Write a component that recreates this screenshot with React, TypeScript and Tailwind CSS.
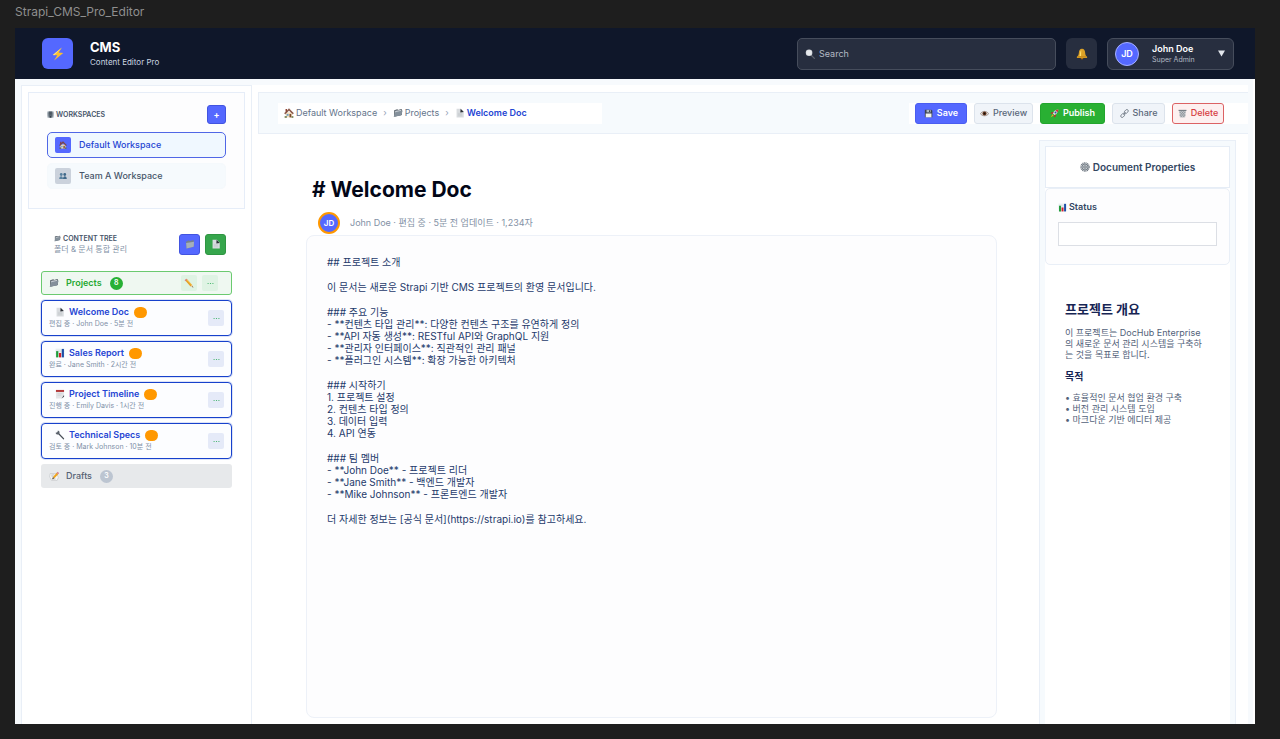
import type { ReactNode } from 'react';

type IconProps = { className?: string };

function Svg({ className = 'size-2.5', children }: { className?: string; children: ReactNode }) {
  return (
    <svg viewBox="0 0 16 16" aria-hidden="true" className={`shrink-0 ${className}`}>
      {children}
    </svg>
  );
}

const Bolt = ({ className }: IconProps) => (
  <Svg className={className}>
    <path d="M12.5 0.5 2 9.2l5.2.3L3.5 15.5 14 6.8l-5.2-.4z" fill="#fbc02d" />
    <path d="M12.5 0.5 2 9.2l2 .1z" fill="#ffe082" />
  </Svg>
);
const Magnifier = ({ className }: IconProps) => (
  <Svg className={className}>
    <path d="m9.5 9.5 5.5 5.5" stroke="#5d636e" strokeWidth="2" strokeLinecap="round" />
    <circle cx="6.5" cy="6" r="5.3" fill="#d5d9de" />
    <circle cx="6.5" cy="6" r="4" fill="#e6e9ec" />
  </Svg>
);
const Bell = ({ className }: IconProps) => (
  <Svg className={className}>
    <circle cx="8" cy="13.4" r="1.8" fill="#a86d10" />
    <path d="M8 1c3 0 4 2.4 4.2 5.4.1 2.8.9 4 2.6 5.1.5.9-.3 1.7-1.3 1.7h-11c-1 0-1.8-.8-1.3-1.7 1.7-1.100 2.500-2.300 2.600-5.100C4 3.400 5 1 8 1z" fill="#dba127" />
    <path d="M7 2.500c-1.500 1-1.600 4.500-2.300 8h2z" fill="#ffdf6b" />
    <path d="M2 11.800h12" stroke="#a86d10" strokeWidth="0.8" />
  </Svg>
);
const Building = ({ className }: IconProps) => (
  <Svg className={className}>
    <path d="M1 1h14v14H1z" fill="#9aa5ae" />
    <path d="M4 1h8v14H4z" fill="#68747e" />
    <path d="M5 3h6M5 6h6M5 9h6M1.500 5h2M1.500 9h2M12.500 5h2M12.500 9h2" stroke="#303b45" strokeWidth="1.300" />
    <path d="M6.500 12h3v3h-3z" fill="#263039" />
  </Svg>
);
const House = ({ className }: IconProps) => (
  <Svg className={className}>
    <path d="M3 7h10v8H3z" fill="#f3dfc0" />
    <path d="M2.500 1.500h2.200V6H2.500z" fill="#8a3a28" />
    <path d="M8 1 .8 8.500 2 9.600l6-5.900 6 5.900 1.200-1.100z" fill="#7d4535" stroke="#7d4535" strokeWidth=".8" />
    <path d="M8.800 9.500h2.800V15H8.800z" fill="#7b4a2b" />
    <path d="M4.300 9.500h3v3h-3z" fill="#6aa0c7" />
    <path d="M1 13h3.500v2.500H1zM12 13h3v2.500h-3z" fill="#5f6f3b" />
  </Svg>
);
const People = ({ className }: IconProps) => (
  <Svg className={className}>
    <circle cx="4.500" cy="5" r="2.800" fill="#57809f" />
    <circle cx="11.500" cy="5" r="2.800" fill="#3f6889" />
    <path d="M.5 14c0-7.500 7.500-7.500 7.500 0z" fill="#57809f" />
    <path d="M8 14c0-7.500 7.500-7.500 7.500 0z" fill="#3f6889" />
  </Svg>
);
const OpenFolder = ({ className }: IconProps) => (
  <Svg className={className}>
    <path d="M2 3.500 7 2l1 1 6-1.500V11L2 14z" fill="#46505a" />
    <path d="M3.500 4.500 13 3l-.5 6-9 2z" fill="#d3d9de" />
    <path d="m1 14 3-7.500L15.500 4 13 12z" fill="#84909b" />
  </Svg>
);
const Folder = ({ className }: IconProps) => (
  <Svg className={className}>
    <path d="M1.500 4.500 6 2l1.500 1L14 1.500v11L2.500 15z" fill="#75818e" />
    <path d="m1.800 6.500 12.700-2.300-.6 8.300-11.400 2.500z" fill="#a5afb9" />
  </Svg>
);
const Page = ({ className }: IconProps) => (
  <Svg className={className}>
    <path d="M2.500 1h7L14 6v9H2.500z" fill="#d9dcdf" />
    <path d="M9 1 14 6.500l-5.500.5z" fill="#2d3238" />
    <path d="M4.500 8.500h7M4.500 10.500h7M4.500 12.500h7" stroke="#b7bcc2" strokeWidth="0.600" />
  </Svg>
);
const Pencil = ({ className }: IconProps) => (
  <Svg className={className}>
    <path d="m3 2.500 8.800 9.800" stroke="#e5a026" strokeWidth="3.600" />
    <path d="M3.700 2 13 12" stroke="#ffd365" strokeWidth="1" />
    <path d="m1 3.700 2.600-2.600 1.300 1.500-2.600 2.500z" fill="#dc7e85" />
    <path d="m10.500 13.400 2.600-2.400 1.900 4.200z" fill="#ecc89a" />
    <path d="m13 14.200 1-1 1 2z" fill="#22252a" />
  </Svg>
);
const BarChart = ({ className }: IconProps) => (
  <Svg className={className}>
    <path d="M1 1h14v14H1z" fill="#e8eef0" />
    <path d="M1 5h14M1 9h14" stroke="#c4cdd2" strokeWidth="0.600" />
    <path d="M1.800 5h3.500v10H1.800z" fill="#1f9d3a" />
    <path d="M6.300 8h3.500v7H6.300z" fill="#d3202c" />
    <path d="M10.800 1.500h3.500V15h-3.500z" fill="#1d4fa8" />
  </Svg>
);
const Calendar = ({ className }: IconProps) => (
  <Svg className={className}>
    <path d="M1.500 3h13v9l-3 3h-10z" fill="#e3e4e7" />
    <path d="M1.500 1.500h13v3.200h-13z" fill="#b3383a" />
    <path d="M14.500 9.500v2.700l-4 3z" fill="#3a3f46" />
    <path d="M4 7.500h8M4 10h6" stroke="#c9cbd0" strokeWidth="1" />
  </Svg>
);
const Wrench = ({ className }: IconProps) => (
  <Svg className={className}>
    <path d="m5 5 8.500 8.800" stroke="#454c55" strokeWidth="2.300" strokeLinecap="round" />
    <path d="M4.600.8 3.900 3.600 1 4.300c.2 2.300 2.800 3.500 4.800 2.400L7 5.500C7.800 3.400 6.900 1.400 4.600.8z" fill="#59616b" />
  </Svg>
);
const Memo = ({ className }: IconProps) => (
  <Svg className={className}>
    <path d="M2 4h10l3 6-2 5H4L1 9z" fill="#f7f7f6" stroke="#b4b8bd" strokeWidth=".8" />
    <path d="m3.500 6.500 5-.5M4 8.500l3-.3M4.500 12.800h6" stroke="#9ba1a8" strokeWidth="0.900" />
    <path d="M13.500 4 7.500 10.500" stroke="#eea41c" strokeWidth="3.200" />
    <path d="m15 2.400-1.700 1.900" stroke="#d97b84" strokeWidth="3.200" />
    <path d="m5.200 13 1-3.300 2.400 2z" fill="#4d3f29" />
  </Svg>
);
const Floppy = ({ className }: IconProps) => (
  <Svg className={className}>
    <path d="M1.500 1.500H13L14.800 3v11.800H1.500z" fill="#3b4350" />
    <path d="M4.500 1.500h7.500V6H4.500z" fill="#aeb8c2" />
    <path d="M9 2.200h1.800v3H9z" fill="#343b46" />
    <path d="M3 8h10.300v6.800H3z" fill="#f0f1ef" />
  </Svg>
);
const Eye = ({ className }: IconProps) => (
  <Svg className={className}>
    <path d="M.5 8.500C4 2.800 12 2.800 15.500 8.500 12 13.200 4 13.200.5 8.500z" fill="#e7e2de" stroke="#75625a" strokeWidth="1" />
    <circle cx="8" cy="8" r="3.600" fill="#6b3d24" />
    <circle cx="8" cy="8" r="1.700" fill="#120c09" />
  </Svg>
);
const Rocket = ({ className }: IconProps) => (
  <Svg className={className}>
    <path d="M14.800 1c-4.500 0-7.800 2.500-10 6.500L8.300 11c4-2 6.500-5.500 6.500-10z" fill="#d5dce4" />
    <path d="M14.800 1c-2 0-3.600.4-5 1.200L13.500 6c.9-1.500 1.300-3 1.300-5z" fill="#d33035" />
    <path d="M6.500 5.300 2.700 5.800 1 8.800l4-.7zM10.500 9.500l-.5 4-3 1.700.7-4z" fill="#c4272d" />
    <circle cx="9.800" cy="6.200" r="1.700" fill="#27599a" />
    <path d="M4.500 9.500 1 15l5.500-3.500z" fill="#f6a21c" />
  </Svg>
);
const Link = ({ className }: IconProps) => (
  <Svg className={className}>
    <g fill="none" stroke="#6b7581" strokeWidth="1.400">
      <rect x="7.200" y="2" width="8" height="5" rx="2.500" transform="rotate(-45 11.200 4.500)" />
      <rect x=".8" y="9" width="8" height="5" rx="2.500" transform="rotate(-45 4.800 11.500)" />
      <path d="m5.800 10.200 4.400-4.400" />
    </g>
  </Svg>
);
const Trash = ({ className }: IconProps) => (
  <Svg className={className}>
    <path d="M2 3h12l-1.300 12H3.300z" fill="#c3c6ca" />
    <path d="m3 5 8 9M6 4l7 8M3.500 10l3.500 4.500M13 5l-8 9M10 4l-7 8M12.500 10 9 14.500M10 4l3 3M6 4 3 7" stroke="#777d84" strokeWidth=".8" />
    <path d="M1 1.500h14v2H1z" fill="#747a82" />
  </Svg>
);
const Gear = ({ className }: IconProps) => (
  <Svg className={className}>
    <circle cx="8" cy="8" r="6.600" fill="none" stroke="#6f7882" strokeWidth="2" strokeDasharray="1.700 .9" />
    <circle cx="8" cy="8" r="5" fill="#d3d8dc" stroke="#6a737d" strokeWidth="1.600" />
    <path d="M8 3.500v9M4 5.700l8 4.600M12 5.700l-8 4.600" stroke="#7b848d" strokeWidth=".8" />
    <circle cx="8" cy="8" r="1.900" fill="#e3e6e9" stroke="#444d57" />
  </Svg>
);
const Dots = ({ className }: IconProps) => (
  <Svg className={className}>
    <g fill="#35b060">
      <circle cx="2.500" cy="8" r="1.400" />
      <circle cx="8" cy="8" r="1.400" />
      <circle cx="13.500" cy="8" r="1.400" />
    </g>
  </Svg>
);

const documents = [
  { title: 'Welcome Doc', meta: '편집 중 · John Doe · 5분 전', Icon: Page },
  { title: 'Sales Report', meta: '완료 · Jane Smith · 2시간 전', Icon: BarChart },
  { title: 'Project Timeline', meta: '진행 중 · Emily Davis · 1시간 전', Icon: Calendar },
  { title: 'Technical Specs', meta: '검토 중 · Mark Johnson · 10분 전', Icon: Wrench },
];

const blocks = [
  ['## 프로젝트 소개'],
  ['이 문서는 새로운 Strapi 기반 CMS 프로젝트의 환영 문서입니다.'],
  [
    '### 주요 기능',
    '- **컨텐츠 타입 관리**: 다양한 컨텐츠 구조를 유연하게 정의',
    '- **API 자동 생성**: RESTful API와 GraphQL 지원',
    '- **관리자 인터페이스**: 직관적인 관리 패널',
    '- **플러그인 시스템**: 확장 가능한 아키텍처',
  ],
  ['### 시작하기', '1. 프로젝트 설정', '2. 컨텐츠 타입 정의', '3. 데이터 입력', '4. API 연동'],
  [
    '### 팀 멤버',
    '- **John Doe** - 프로젝트 리더',
    '- **Jane Smith** - 백엔드 개발자',
    '- **Mike Johnson** - 프론트엔드 개발자',
  ],
  ['더 자세한 정보는 [공식 문서](https://strapi.io)를 참고하세요.'],
];

function Header() {
  return (
    <header className="flex h-[51px] shrink-0 items-center bg-[#0f172a] pr-[21px] pl-[27px]">
      <div className="flex size-[31px] items-center justify-center rounded-md bg-[#5468ff]">
        <Bolt className="size-3.5" />
      </div>
      <div className="ml-[17px] flex flex-col">
        <span className="text-[13px] leading-4 font-bold text-white">CMS</span>
        <span className="text-[8px] leading-[14px] text-[#cbd5e1]">Content Editor Pro</span>
      </div>
      <label className="ml-auto flex h-8 w-[259px] items-center gap-1 rounded-[5px] border border-[#464d5c] bg-[#272e3f] px-[7px]">
        <Magnifier />
        <input
          type="search"
          aria-label="Search"
          placeholder="Search"
          className="min-w-0 flex-1 bg-transparent text-[9px] leading-3 text-white outline-none placeholder:text-[#b4bac5]"
        />
      </label>
      <button type="button" aria-label="Notifications" className="ml-2.5 flex size-[31px] items-center justify-center rounded-md bg-[#272e3f]">
        <Bell className="size-3" />
      </button>
      <button type="button" className="ml-2.5 flex h-8 w-[127px] items-center rounded-md border border-[#464d5c] bg-[#272e3f] pr-2 pl-[7px] text-left">
        <span className="flex size-6 items-center justify-center rounded-full border border-[#a5b0ff] bg-[#5468ff] text-[9px] font-semibold text-white">
          JD
        </span>
        <span className="ml-[13px] flex flex-col">
          <span className="text-[9px] leading-[11px] font-semibold text-white">John Doe</span>
          <span className="text-[7px] leading-[11px] text-[#b4bac5]">Super Admin</span>
        </span>
        <svg viewBox="0 0 7 7" aria-hidden="true" className="ml-auto size-[7px]">
          <path d="M0 .5h7l-3.500 6z" fill="#e2e6ec" />
        </svg>
      </button>
    </header>
  );
}

function Workspaces() {
  return (
    <section className="border border-[#e6edf8] bg-[#fdfdfe] px-[18px] pt-3 pb-[19px]">
      <div className="flex items-center justify-between">
        <h2 className="flex items-center gap-0.5 text-[7px] leading-3 font-semibold text-[#475569]">
          <Building className="size-[7px]" />
          WORKSPACES
        </h2>
        <button type="button" aria-label="Add workspace" className="flex size-[19px] items-center justify-center rounded-[3px] border border-[#4254e0] bg-[#5468ff] text-[9px] font-bold text-white">
          +
        </button>
      </div>
      <nav className="mt-2 flex flex-col gap-[5px] text-[9px] leading-3 font-medium">
        <a href="#default" className="flex h-[26px] items-center gap-2 rounded-[5px] border border-[#5067e6] bg-[#f0f8ff] px-[7px] text-[#2545d3]">
          <span className="flex size-4 items-center justify-center rounded-[2px] bg-[#5468ff]">
            <House className="size-2" />
          </span>
          Default Workspace
        </a>
        <a href="#team-a" className="flex h-[26px] items-center gap-2 rounded-[5px] border border-[#f5f9fc] bg-[#f6fafd] px-[7px] text-[#475569]">
          <span className="flex size-4 items-center justify-center rounded-[2px] bg-[#cbd2dc]">
            <People className="size-2" />
          </span>
          Team A Workspace
        </a>
      </nav>
    </section>
  );
}

function ContentTree() {
  return (
    <section className="mt-6 px-[13px]">
      <div className="flex items-center justify-between pr-1.5 pl-[13px]">
        <div>
          <h2 className="flex items-center gap-0.5 text-[7px] leading-[11px] font-semibold text-[#475569]">
            <OpenFolder className="size-[7px]" />
            CONTENT TREE
          </h2>
          <p className="text-[8px] leading-[11px] text-[#8493a8]">폴더 &amp; 문서 통합 관리</p>
        </div>
        <div className="flex gap-[5px]">
          <button type="button" aria-label="New folder" className="flex size-[21px] items-center justify-center rounded-[3px] border border-[#4254e0] bg-[#5468ff]">
            <Folder />
          </button>
          <button type="button" aria-label="New document" className="flex size-[21px] items-center justify-center rounded-[3px] border border-[#2f9542] bg-[#36a64c]">
            <Page />
          </button>
        </div>
      </div>
      <ul className="mt-4 flex flex-col gap-[5px]">
        <li className="flex h-6 items-center rounded-[3px] border border-[#6bca70] bg-[#eff8f1] pr-[13px] pl-[7px]">
          <OpenFolder />
          <span className="ml-[7px] text-[9px] leading-3 font-semibold text-[#27a933]">Projects</span>
          <span className="ml-2 flex size-[13px] items-center justify-center rounded-full bg-[#27b034] text-[7px] font-semibold text-white">8</span>
          <button type="button" aria-label="Rename Projects" className="ml-auto flex size-4 items-center justify-center rounded-[2px] bg-[#dff3e4]">
            <Pencil />
          </button>
          <button type="button" aria-label="More for Projects" className="ml-[5px] flex size-4 items-center justify-center rounded-[2px] bg-[#dff3e4]">
            <Dots className="size-[7px]" />
          </button>
        </li>
        {documents.map(({ title, meta, Icon }) => (
          <li key={title} className="flex h-9 items-center justify-between rounded-[4px] border border-[#1741cc] bg-[#fcfdff] px-[7px] ring-1 ring-[#1741cc]/15">
            <div>
              <div className="flex items-center pl-1.5">
                <Icon />
                <a href="#document" className="ml-1 text-[9px] leading-3 font-semibold text-[#2545d3]">{title}</a>
                <span className="ml-[5px] h-[11px] w-[13px] rounded-full bg-[#ff9800]" />
              </div>
              <p className="text-[7px] leading-3 text-[#7f90a7]">{meta}</p>
            </div>
            <button type="button" aria-label={`More for ${title}`} className="flex size-4 items-center justify-center rounded-[2px] bg-[#e5eaf8]">
              <Dots className="size-[7px]" />
            </button>
          </li>
        ))}
        <li className="flex h-6 items-center rounded-[3px] bg-[#e7e9eb] px-2">
          <Memo />
          <span className="ml-[7px] text-[9px] leading-3 font-medium text-[#566274]">Drafts</span>
          <span className="ml-2 flex size-[13px] items-center justify-center rounded-full bg-[#bcc5d1] text-[7px] font-semibold text-white">3</span>
        </li>
      </ul>
    </section>
  );
}

const actionBase = 'flex h-[21px] items-center justify-center gap-1 rounded-[3px] border text-[9px] leading-3';

function Toolbar() {
  return (
    <div className="flex h-[42px] shrink-0 items-center justify-between border border-r-0 border-[#e9eff7] bg-[#f6fafd] pl-[19px]">
      <nav aria-label="Breadcrumb" className="flex h-[21px] w-[324px] items-center bg-white pl-1.5 text-[9px] leading-3 text-[#64748b]">
        <a href="#default" className="flex items-center gap-0.5"><House />Default Workspace</a>
        <span className="mx-1.5 text-[#94a3b8]">›</span>
        <a href="#projects" className="flex items-center gap-0.5"><OpenFolder />Projects</a>
        <span className="mx-1.5 text-[#94a3b8]">›</span>
        <a href="#document" aria-current="page" className="flex items-center gap-0.5 font-semibold text-[#2545d3]"><Page />Welcome Doc</a>
      </nav>
      <div className="flex h-[21px] gap-[7px] bg-white pr-6 pl-1.5">
        <button type="button" className={`${actionBase} w-[52px] border-[#4a5df0] bg-[#5468ff] font-semibold text-white`}><Floppy className="size-[9px]" />Save</button>
        <button type="button" className={`${actionBase} w-[59px] border-[#dce3ec] bg-[#f0f4f9] font-medium text-[#5b6879]`}><Eye className="size-[9px]" />Preview</button>
        <button type="button" className={`${actionBase} w-[65px] border-[#22a52d] bg-[#29b033] font-semibold text-white`}><Rocket className="size-[9px]" />Publish</button>
        <button type="button" className={`${actionBase} w-[53px] border-[#dce3ec] bg-[#f0f4f9] font-medium text-[#5b6879]`}><Link className="size-[9px]" />Share</button>
        <button type="button" className={`${actionBase} w-[52px] border-[#dc6264] bg-[#fdf0f0] font-medium text-[#d63c40]`}><Trash className="size-[9px]" />Delete</button>
      </div>
    </div>
  );
}

function DocumentEditor() {
  return (
    <article className="flex min-w-0 flex-1 flex-col pt-11 pr-[42px] pb-1.5 pl-12">
      <h1 className="pl-1.5 text-[21px] leading-6 font-bold text-[#020617]"># Welcome Doc</h1>
      <div className="mt-2.5 flex items-center pl-3">
        <span className="flex size-[22px] items-center justify-center rounded-full border-2 border-[#ff9800] bg-[#5468ff] text-[8px] font-semibold text-white">JD</span>
        <p className="ml-2.5 text-[9px] leading-3 text-[#8391a5]">John Doe · 편집 중 · 5분 전 업데이트 · 1,234자</p>
      </div>
      <div
        role="textbox"
        aria-multiline="true"
        aria-label="Document body"
        contentEditable
        suppressContentEditableWarning
        className="mt-px flex flex-1 flex-col gap-[13px] rounded-lg border border-[#edf1f8] bg-[#fdfdfe] px-5 py-5 text-[10px] leading-3 text-[#1e3a6b] outline-none"
      >
        {blocks.map((lines) => (
          <div key={lines[0]}>
            {lines.map((line) => (
              <p key={line}>{line}</p>
            ))}
          </div>
        ))}
      </div>
    </article>
  );
}

function Properties() {
  return (
    <aside className="mt-1.5 mr-3 flex w-[197px] shrink-0 flex-col border border-b-0 border-[#e9eff7] bg-[#f6fafd] px-[5px] pt-[5px]">
      <h2 className="flex h-[42px] shrink-0 items-center justify-center gap-[3px] border border-[#e6edf6] bg-white text-[10px] leading-4 font-semibold text-[#334762]">
        <Gear />
        Document Properties
      </h2>
      <div className="flex flex-1 flex-col bg-white">
        <div className="h-[77px] rounded-[5px] border border-[#e9eff7] bg-[#fdfdfe] px-3 pt-3">
          <label htmlFor="status" className="flex items-center gap-0.5 text-[9px] leading-3 font-semibold text-[#334762]">
            <BarChart className="size-[9px]" />
            Status
          </label>
          <input id="status" className="mt-[9px] h-6 w-full border border-[#dcdfe5] bg-white px-2 text-[10px] outline-none" />
        </div>
        <div className="pt-9 pr-6 pl-5 text-[9px] leading-[11px] text-[#526179]">
          <h3 className="text-[13px] leading-4 font-bold text-[#172554]">프로젝트 개요</h3>
          <p className="mt-2.5 break-all">이 프로젝트는 DocHub Enterprise의 새로운 문서 관리 시스템을 구축하는 것을 목표로 합니다.</p>
          <h4 className="mt-2.5 text-[10px] leading-3 font-bold text-[#172554]">목적</h4>
          <ul className="mt-2.5">
            <li>• 효율적인 문서 협업 환경 구축</li>
            <li>• 버전 관리 시스템 도입</li>
            <li>• 마크다운 기반 에디터 제공</li>
          </ul>
        </div>
      </div>
    </aside>
  );
}

export default function App() {
  return (
    <div className="flex min-h-screen flex-col bg-[#1e1e1e] pr-[25px] pb-[15px] pl-[15px] font-['Inter','Noto_Sans_CJK_KR',sans-serif]">
      <p className="pt-1 pb-2 text-[12px] leading-4 text-[#8f8f8f]">Strapi_CMS_Pro_Editor</p>
      <div className="flex flex-1 flex-col bg-white">
        <Header />
        <div className="mr-0.5 flex flex-1 bg-[#f7fafd] pt-1.5 pr-[5px] pl-1.5">
          <aside className="w-[231px] shrink-0 border border-b-0 border-[#e9eff7] bg-white p-1.5">
            <Workspaces />
            <ContentTree />
          </aside>
          <main className="flex min-w-0 flex-1 flex-col bg-white pt-[7px] pl-1.5">
            <Toolbar />
            <div className="flex flex-1">
              <DocumentEditor />
              <Properties />
            </div>
          </main>
        </div>
      </div>
    </div>
  );
}
